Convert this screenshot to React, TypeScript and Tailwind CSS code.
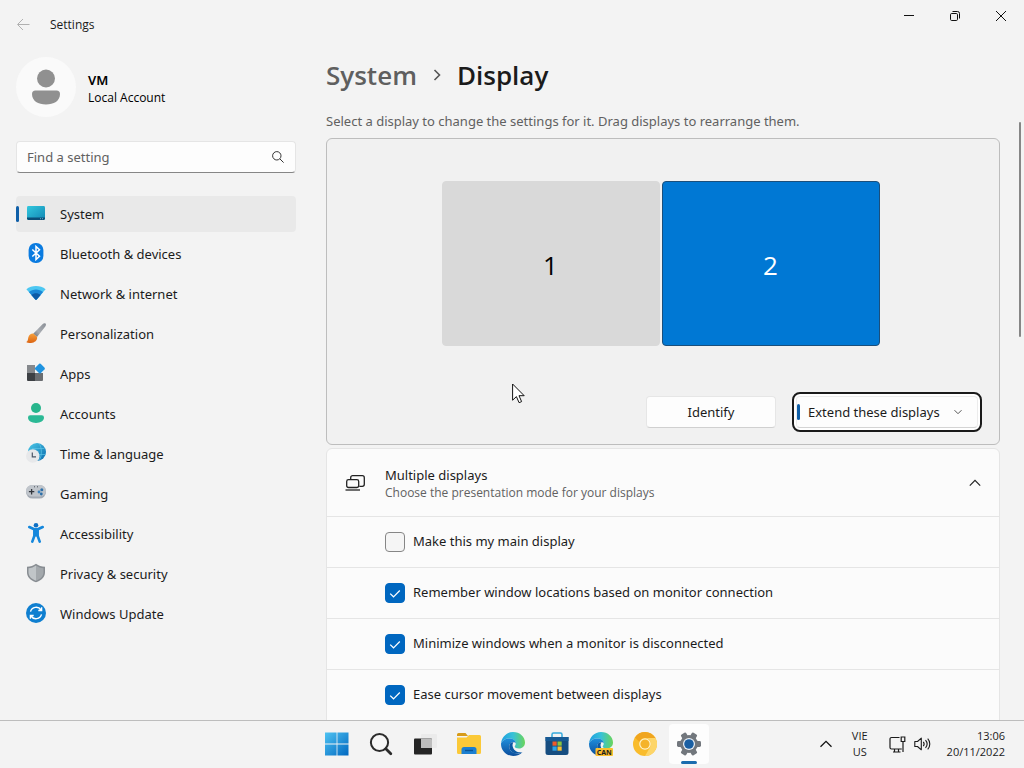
import React, { useState } from "react";

interface NavItem {
  label: string;
  icon: React.ReactNode;
}

interface DisplayOption {
  id: string;
  label: string;
  checked: boolean;
}

const SystemIcon = () => (
  <svg viewBox="0 0 20 20" className="h-5 w-5">
    <defs>
      <linearGradient id="sys" x1="0" y1="0" x2="1" y2="1">
        <stop offset="0" stopColor="#32c8de" />
        <stop offset="1" stopColor="#1287b4" />
      </linearGradient>
    </defs>
    <rect x="1" y="3" width="18" height="14" rx="1.4" fill="url(#sys)" />
    <path d="M1 14.4h18v1.2a1.4 1.4 0 0 1-1.4 1.4H2.4A1.4 1.4 0 0 1 1 15.6z" fill="#0b4f78" />
    <path d="M14 15.7h1M16 15.7h1" stroke="#8fd0e8" strokeWidth=".7" />
  </svg>
);

const BluetoothIcon = () => (
  <svg viewBox="0 0 20 20" className="h-5 w-5">
    <rect x="2.6" y="0" width="14.8" height="20" rx="7" fill="#0a7be0" />
    <path d="M6.3 6.5l7.2 6.7-3.5 3.3V3.5l3.5 3.3-7.2 6.7" fill="none" stroke="#fff" strokeWidth="1.5" />
  </svg>
);

const NetworkIcon = () => (
  <svg viewBox="0 0 20 20" className="h-5 w-5">
    <path d="M.4 6.2C5.5 1.8 14.5 1.8 19.6 6.2L10.7 16.4a1 1 0 0 1-1.4 0z" fill="#4cc7f2" />
    <path d="M2.9 9C6.8 5.6 13.2 5.6 17.1 9l-6.4 7.400a1 1 0 0 1-1.4 0z" fill="#1b87d6" />
    <path d="M5.4 11.9c2.6-2.3 6.6-2.3 9.2 0l-3.900 4.500a1 1 0 0 1-1.4 0z" fill="#0d5aa5" />
  </svg>
);

const BrushIcon = () => (
  <svg viewBox="0 0 20 20" className="h-5 w-5">
    <defs>
      <linearGradient id="handle" x1="1" y1="0" x2="0" y2="1">
        <stop offset="0" stopColor="#8a8f96" />
        <stop offset=".6" stopColor="#a9adb3" />
        <stop offset="1" stopColor="#6d7076" />
      </linearGradient>
      <linearGradient id="bristle" x1="0" y1="0" x2="0" y2="1">
        <stop offset="0" stopColor="#f7a13c" />
        <stop offset="1" stopColor="#dc6412" />
      </linearGradient>
    </defs>
    <path d="M19.5.5c.8.7.5 1.9-.2 2.9L11 14 7.2 10.7 16.5 1.2c1-1 2.2-1.4 3-.7z" fill="url(#handle)" />
    <path d="M7.3 10.6l3.8 3.4c.6 3.2-2.600 6-6.300 5.900-2 0-3.900-.3-4.500-1 1.800-.6 1.500-2.200 2-4.300.6-2.700 2.900-4.200 5-4z" fill="url(#bristle)" />
  </svg>
);

const AppsIcon = () => (
  <svg viewBox="0 0 20 20" className="h-5 w-5">
    <path d="M1 2h8v8H1z" fill="#85888c" />
    <path d="M1 10h8v8H2a1 1 0 0 1-1-1z" fill="#3d4044" />
    <path d="M9 10h8v7a1 1 0 0 1-1 1H9z" fill="#6a6d71" />
    <path d="M13.2.8a1 1 0 0 1 1.4 0l4 4a1 1 0 0 1 0 1.4l-4 4a1 1 0 0 1-1.4 0l-4-4a1 1 0 0 1 0-1.4z" fill="#1f93e0" />
  </svg>
);

const AccountsIcon = () => (
  <svg viewBox="0 0 20 20" className="h-5 w-5">
    <circle cx="10" cy="5" r="5" fill="#27b58c" />
    <path d="M4.3 12.3h11.4A2.3 2.3 0 0 1 18 14.6c0 3.500-3.600 5.400-8 5.400s-8-1.900-8-5.400a2.300 2.300 0 0 1 2.300-2.300z" fill="#2bb995" />
  </svg>
);

const TimeIcon = () => (
  <svg viewBox="0 0 20 20" className="h-5 w-5">
    <defs>
      <linearGradient id="globe" x1="0" y1="0" x2="1" y2="1">
        <stop offset="0" stopColor="#4cc9e8" />
        <stop offset="1" stopColor="#0b6cae" />
      </linearGradient>
    </defs>
    <circle cx="11" cy="9" r="9" fill="url(#globe)" />
    <path d="M6 5.5h12.5M12 11.5h7.5M13.5 1c2.5 5 2.5 11 0 16" fill="none" stroke="#5cc4e6" strokeWidth=".7" />
    <circle cx="6.8" cy="13" r="6.8" fill="#e7e8ea" />
    <path d="M6.3 9.5v4.3H10" fill="none" stroke="#4d5666" strokeWidth="1.2" />
  </svg>
);

const GamingIcon = () => (
  <svg viewBox="0 0 20 20" className="h-5 w-5">
    <rect x="0" y="2" width="20" height="13.6" rx="6.5" fill="#a4abb4" />
    <rect x="0" y="2" width="20" height="11.5" rx="5.75" fill="#c0c5cb" />
    <path d="M5.6 6v5.4M2.9 8.7h5.4" stroke="#33373d" strokeWidth="1.3" />
    <path d="M8 3.8h1M11 3.8h1" stroke="#4b5058" />
    <circle cx="15.8" cy="6.7" r="1.5" fill="#2d6fa8" />
    <circle cx="13" cy="9" r="1.4" fill="#3a83bf" />
    <circle cx="15.3" cy="11" r="1.4" fill="#2d6fa8" />
  </svg>
);

const AccessibilityIcon = () => (
  <svg viewBox="0 0 20 20" className="h-5 w-5">
    <circle cx="10" cy="2.3" r="2.3" fill="#0d6fc4" />
    <path d="M7.2 5h5.6v8.5H7.2z" fill="#1487dc" />
    <path
      d="M3.3 4l4.9 2.3h3.6L16.7 4M8.5 6.5v6L6.3 18.6M11.5 6.5v6l2.2 6.1"
      fill="none"
      stroke="#1487dc"
      strokeWidth="2.6"
      strokeLinecap="round"
      strokeLinejoin="round"
    />
  </svg>
);

const ShieldIcon = () => (
  <svg viewBox="0 0 20 20" className="h-5 w-5">
    <path d="M10 .8c2.6 2 5.6 2.9 9 3v5.400c0 4.600-3.200 7.900-9 10.100-5.800-2.200-9-5.500-9-10.100V3.800c3.400-.1 6.400-1 9-3z" fill="#888d92" />
    <path d="M10 2.5v15.200c-5-2-7.500-4.800-7.500-8.500V5.200c2.800-.2 5.300-1 7.500-2.700z" fill="#c0c5c8" />
    <path d="M10 2.5v15.200c5-2 7.500-4.800 7.500-8.500V5.200c-2.800-.2-5.300-1-7.500-2.700z" fill="#a3a8ac" />
  </svg>
);

const UpdateIcon = () => (
  <svg viewBox="0 0 20 20" className="h-5 w-5">
    <circle cx="10" cy="10" r="10" fill="#0f7fd0" />
    <path
      d="M4.5 8.7A5.8 5.8 0 0 1 15 7M15.6 4.2v3.3h-3.3M15.5 11.3A5.8 5.8 0 0 1 5 13M4.4 15.8v-3.3h3.3"
      fill="none"
      stroke="#fff"
      strokeWidth="1.4"
    />
  </svg>
);

const navItems: NavItem[] = [
  { label: "System", icon: <SystemIcon /> },
  { label: "Bluetooth & devices", icon: <BluetoothIcon /> },
  { label: "Network & internet", icon: <NetworkIcon /> },
  { label: "Personalization", icon: <BrushIcon /> },
  { label: "Apps", icon: <AppsIcon /> },
  { label: "Accounts", icon: <AccountsIcon /> },
  { label: "Time & language", icon: <TimeIcon /> },
  { label: "Gaming", icon: <GamingIcon /> },
  { label: "Accessibility", icon: <AccessibilityIcon /> },
  { label: "Privacy & security", icon: <ShieldIcon /> },
  { label: "Windows Update", icon: <UpdateIcon /> },
];

const initialOptions: DisplayOption[] = [
  { id: "main", label: "Make this my main display", checked: false },
  { id: "remember", label: "Remember window locations based on monitor connection", checked: true },
  { id: "minimize", label: "Minimize windows when a monitor is disconnected", checked: true },
  { id: "ease", label: "Ease cursor movement between displays", checked: true },
];

const TitleBar = () => (
  <header className="flex h-[49px] shrink-0 items-start justify-between">
    <div className="flex h-[49px] items-center gap-5 pl-4">
      <button type="button" aria-label="Back" disabled>
        <svg viewBox="0 0 14 14" className="h-3.5 w-3.5" fill="none" stroke="#b0b0b0">
          <path d="M13.5 6.5H2M7 1L1.5 6.5 7 12" />
        </svg>
      </button>
      <span className="font-['Open_Sans',sans-serif] text-xs text-[#1b1b1b]">Settings</span>
    </div>
    <div className="flex">
      <button type="button" aria-label="Minimize" className="flex h-8 w-[46px] items-center justify-center">
        <svg viewBox="0 0 12 12" className="h-3 w-3" stroke="#111">
          <path d="M1 5.5h10" />
        </svg>
      </button>
      <button type="button" aria-label="Restore" className="flex h-8 w-[46px] items-center justify-center">
        <svg viewBox="0 0 12 12" className="h-3 w-3" fill="none" stroke="#111">
          <rect x="1.5" y="3.5" width="7" height="7" rx="1.2" />
          <path d="M3.5 1.5H8.5a2 2 0 0 1 2 2v5" />
        </svg>
      </button>
      <button type="button" aria-label="Close" className="flex h-8 w-[46px] items-center justify-center">
        <svg viewBox="0 0 12 12" className="h-3 w-3" stroke="#111">
          <path d="M1 1l10 10M11 1L1 11" />
        </svg>
      </button>
    </div>
  </header>
);

const Sidebar = () => (
  <aside className="w-[280px] shrink-0 pt-2">
    <div className="flex items-center gap-3">
      <div className="flex h-[60px] w-[60px] items-center justify-center rounded-full bg-[#fafafa]">
        <svg viewBox="0 0 28 36" className="h-9 w-7" fill="#909090">
          <circle cx="14" cy="9.5" r="9" />
          <path d="M3.5 21.5h21A3.5 3.5 0 0 1 28 25c0 7-6.3 10.5-14 10.5S0 32 0 25a3.500 3.500 0 0 1 3.500-3.500z" />
        </svg>
      </div>
      <div className="pt-0.5 text-black">
        <p className="text-[13px] leading-5 font-semibold">VM</p>
        <p className="font-['Open_Sans',sans-serif] text-xs leading-4">Local Account</p>
      </div>
    </div>

    <div className="relative mt-6">
      <input
        type="text"
        placeholder="Find a setting"
        aria-label="Find a setting"
        className="block h-8 w-full rounded border border-[#e5e5e5] border-b-[#868686] bg-[#fdfdfd] pr-9 pl-2.5 text-[13px] placeholder:text-[#616161]"
      />
      <svg viewBox="0 0 12 12" className="absolute top-2.5 right-3 h-3 w-3" fill="none" stroke="#333">
        <circle cx="4.8" cy="4.8" r="4.2" />
        <path d="M7.9 7.9l3.7 3.7" />
      </svg>
    </div>

    <nav className="mt-[23px] flex flex-col gap-1">
      {navItems.map((item, index) => (
        <a
          key={item.label}
          href="#"
          className={
            index === 0
              ? "flex h-9 items-center rounded bg-[#e9e9e9] text-[13px] text-[#1b1b1b]"
              : "flex h-9 items-center rounded text-[13px] text-[#1b1b1b]"
          }
        >
          <span className={index === 0 ? "h-4 w-[3px] rounded-full bg-[#0f5fa8]" : "h-4 w-[3px]"} />
          <span className="ml-[7px] pb-0.5">{item.icon}</span>
          <span className="ml-3.5 pt-0.5">{item.label}</span>
        </a>
      ))}
    </nav>
  </aside>
);

const ArrangePanel = () => {
  const [selected, setSelected] = useState<number>(2);
  const [mode, setMode] = useState<string>("extend");

  return (
    <div className="relative rounded-md border border-[#bdbdbd] bg-[#f1f1f1] pt-[42px] pr-[17px] pb-3">
      <div className="flex justify-center gap-0.5 pl-3 font-['Open_Sans',sans-serif] text-[26px]">
        {[1, 2].map((n) => (
          <button
            key={n}
            type="button"
            onClick={() => setSelected(n)}
            className={
              n === selected
                ? "h-[165px] w-[218px] rounded border border-[#1a4f7c] bg-[#0078d4] pt-1 text-white"
                : "h-[165px] w-[218px] rounded border border-[#d9d9d9] bg-[#d9d9d9] pt-1 text-black"
            }
          >
            {n}
          </button>
        ))}
      </div>
      <div className="mt-[46px] flex items-center justify-end gap-4">
        <button
          type="button"
          className="h-8 w-[130px] rounded border border-[#e6e6e6] border-b-[#d0d0d0] bg-[#fdfdfd] pt-0.5 text-[13px] text-[#1b1b1b]"
        >
          Identify
        </button>
        <div className="relative h-10 w-[190px] rounded-lg border-2 border-[#1a1a1a] bg-white p-0.5">
          <select
            aria-label="Presentation mode"
            value={mode}
            onChange={(e) => setMode(e.target.value)}
            className="h-8 w-full appearance-none rounded border border-[#ececec] border-b-[#d4d4d4] bg-[#fdfdfd] pt-0.5 pl-[11px] text-[13px] text-[#1b1b1b]"
          >
            <option value="duplicate">Duplicate these displays</option>
            <option value="extend">Extend these displays</option>
            <option value="only1">Show only on 1</option>
            <option value="only2">Show only on 2</option>
          </select>
          <span className="absolute top-2.5 left-[3px] h-4 w-[3px] rounded-full bg-[#0f5fa8]" />
          <svg
            viewBox="0 0 8 8"
            className="pointer-events-none absolute top-3.5 right-[18px] h-2 w-2"
            fill="none"
            stroke="#555"
          >
            <path d="M.5 2.2L4 5.7l3.5-3.5" />
          </svg>
        </div>
      </div>
      <svg viewBox="0 0 13 21" className="absolute top-[244px] left-[185px] h-[21px] w-[13px]">
        <path
          d="M.6 1v16.2l3.8-3.6 2.7 6.1 2.5-1.1-2.6-5.9h5.2z"
          fill="#fff"
          stroke="#111"
          strokeLinejoin="round"
        />
      </svg>
    </div>
  );
};

const MultipleDisplays = () => {
  const [options, setOptions] = useState<DisplayOption[]>(initialOptions);

  const toggle = (id: string): void => {
    setOptions((prev) => prev.map((o) => (o.id === id ? { ...o, checked: !o.checked } : o)));
  };

  return (
    <section className="mt-[3px] rounded-t-md border border-[#e5e5e5] bg-[#fbfbfb]">
      <button type="button" className="flex h-[67px] w-full items-center pr-[18px] pl-[18px] text-left">
        <svg viewBox="0 0 20 16" className="h-4 w-5" fill="none" stroke="#222" strokeWidth="1.3">
          <path d="M5.7 4.5V2.7a2 2 0 0 1 2-2h9.6a2 2 0 0 1 2 2v6.6a2 2 0 0 1-2 2h-3" />
          <rect x="1.7" y="4.7" width="12" height="7.8" rx="1.8" />
          <path d="M.5 15h14.5" />
        </svg>
        <span className="ml-5 flex-1 pt-0.5">
          <span className="block text-[13px] leading-[18px] text-[#1b1b1b]">Multiple displays</span>
          <span className="block font-['Open_Sans',sans-serif] text-xs leading-[18px] text-[#616161]">
            Choose the presentation mode for your displays
          </span>
        </span>
        <svg viewBox="0 0 12 12" className="h-3 w-3" fill="none" stroke="#222" strokeWidth="1.2">
          <path d="M.8 8.6L6 3.4l5.2 5.2" />
        </svg>
      </button>
      {options.map((o) => (
        <label key={o.id} className="flex h-[51px] items-center gap-2 border-t border-[#e5e5e5] pl-[58px]">
          <span className="relative h-5 w-5">
            <input
              type="checkbox"
              checked={o.checked}
              onChange={() => toggle(o.id)}
              className="block h-5 w-5 appearance-none rounded border border-[#868686] bg-[#f5f5f5] checked:border-[#0067c0] checked:bg-[#0067c0]"
            />
            {o.checked && (
              <svg
                viewBox="0 0 20 20"
                className="pointer-events-none absolute inset-0 h-5 w-5"
                fill="none"
                stroke="#fff"
                strokeWidth="1.2"
              >
                <path d="M5.2 10.6l3.3 3.2 6.3-6.3" />
              </svg>
            )}
          </span>
          <span className="text-[13px] text-[#1b1b1b]">{o.label}</span>
        </label>
      ))}
    </section>
  );
};

const StartLogo = () => (
  <svg viewBox="0 0 24 24" className="h-6 w-6">
    <defs>
      <linearGradient id="win" x1="0" y1="0" x2="1" y2="1">
        <stop offset="0" stopColor="#4fc3f2" />
        <stop offset="1" stopColor="#0067c0" />
      </linearGradient>
    </defs>
    <path d="M0 .5h11.6v11.1H0zM12.400.5H23.500v11.100H12.400zM0 12.400h11.600v11.100H0zM12.400 12.400h11.100v11.100H12.400z" fill="url(#win)" />
  </svg>
);

const SearchLogo = () => (
  <svg viewBox="0 0 24 24" className="h-6 w-6" fill="none" stroke="#2b2b2b">
    <circle cx="10.5" cy="10.5" r="8.6" strokeWidth="2" fill="#f7f7f7" />
    <path d="M16.8 16.8l5 5" strokeWidth="2.8" strokeLinecap="round" />
  </svg>
);

const TaskViewLogo = () => (
  <svg viewBox="0 0 24 24" className="h-6 w-6">
    <rect x="8" y="2" width="16" height="14" rx="1" fill="#ebebeb" />
    <rect x="1" y="6.5" width="18" height="16" rx="1" fill="#252525" />
    <path d="M8 6.5h10a1 1 0 0 1 1 1V16H8z" fill="#bdbdbd" />
  </svg>
);

const ExplorerLogo = () => (
  <svg viewBox="0 0 24 24" className="h-6 w-6">
    <path d="M0 2.5A1.5 1.5 0 0 1 1.500 1h7l2.500 3h-11z" fill="#d79b1a" />
    <path d="M0 5.5h9.5L12 3h10.500A1.500 1.500 0 0 1 24 4.500V20.500A1.500 1.500 0 0 1 22.500 22h-21A1.500 1.500 0 0 1 0 20.500z" fill="#fbc938" />
    <path d="M4.5 22v-4.500A2.500 2.500 0 0 1 7 15h10a2.500 2.500 0 0 1 2.500 2.500V22z" fill="#1b7fd1" />
    <path d="M8 18.5h8" stroke="#0a5395" strokeWidth="1.4" />
  </svg>
);

const EdgeShape = ({ id }: { id: string }) => (
  <>
    <defs>
      <linearGradient id={`${id}-top`} x1="0" y1="0" x2="1" y2="0">
        <stop offset="0" stopColor="#1f9fe0" />
        <stop offset=".5" stopColor="#37c1d8" />
        <stop offset="1" stopColor="#6ad55a" />
      </linearGradient>
      <linearGradient id={`${id}-low`} x1="0" y1="0" x2="0" y2="1">
        <stop offset="0" stopColor="#1f8fdc" />
        <stop offset="1" stopColor="#0b4d9c" />
      </linearGradient>
    </defs>
    <path d="M0 11.5C.6 5 5.6 0 12 0c7 0 12 5 12 10.500 0 3.600-2.600 6-6 6-2.600 0-4.300-.9-4.300-2 0-.7 1-1.200 1-2.800C14.700 8.500 12 6.500 8.500 6.500 4.300 6.500 1.200 8.600 0 11.500z" fill={`url(#${id}-top)`} />
    <path d="M0 11.5C1.2 8.600 4.300 6.500 8.500 6.500c3.500 0 6.200 2 6.200 4.800-1-1-2-1.300-3-1.200-2 .2-3.500 2-3.500 4.400 0 4 3.600 7 8 7 1.800 0 3.600-.4 5.300-1.500C19.500 22.600 16 24 12.200 24 5.400 24 0 18.600 0 12z" fill={`url(#${id}-low)`} />
    <path d="M8.2 14.5c0 4.500 4 7.300 8.300 7 2-.1 3.600-.7 5-1.500-4.300 1-8.800-1-9.800-5.500-.4-1.800 0-3.300 1-4.200-2.700-.8-4.500 1.400-4.500 4.200z" fill="#0c59a4" />
  </>
);

const EdgeLogo = () => (
  <svg viewBox="0 0 24 24" className="h-6 w-6">
    <EdgeShape id="edge" />
  </svg>
);

const EdgeCanaryLogo = () => (
  <svg viewBox="0 0 24 24" className="h-6 w-6">
    <EdgeShape id="canary" />
    <rect x="6.5" y="16" width="17.5" height="8" rx="1" fill="#fbc02d" />
    <text x="15.2" y="22.7" textAnchor="middle" fontSize="7" fontWeight="700" fill="#1c1c1c">
      CAN
    </text>
  </svg>
);

const StoreLogo = () => (
  <svg viewBox="0 0 24 24" className="h-6 w-6">
    <path d="M7 7V2.5A1.5 1.5 0 0 1 8.5 1h7A1.5 1.5 0 0 1 17 2.5V7" fill="none" stroke="#35a9dc" strokeWidth="1.5" />
    <path d="M.5 5h23v15.500A2.500 2.500 0 0 1 21 23H3A2.500 2.500 0 0 1 .5 20.500z" fill="#164d80" />
    <path d="M.5 5h23v4H.5z" fill="#175a94" />
    <path d="M7.5 9.5h4.2v4.2H7.5z" fill="#f05a28" />
    <path d="M12.5 9.5h4.2v4.2h-4.2z" fill="#8bc53f" />
    <path d="M7.5 14.5h4.2v4.2H7.5z" fill="#2ea3e6" />
    <path d="M12.5 14.5h4.2v4.2h-4.2z" fill="#fdc030" />
  </svg>
);

const ChromeCanaryLogo = () => (
  <svg viewBox="0 0 24 24" className="h-6 w-6">
    <circle cx="12" cy="12" r="12" fill="#f9bc2c" />
    <path d="M12 0a12 12 0 0 1 10.4 6H12a6 6 0 0 0-5.6 4L2 5.4A12 12 0 0 1 12 0z" fill="#f0a51e" />
    <path d="M22.4 6A12 12 0 0 1 12 24l5.2-9A6 6 0 0 0 12 6z" fill="#fdd568" />
    <circle cx="12" cy="12" r="5.8" fill="#fff3cc" />
    <circle cx="12" cy="12" r="4.6" fill="#f5b32a" />
  </svg>
);

const GearLogo = () => (
  <svg viewBox="0 0 24 24" className="h-6 w-6">
    <g fill="#72777d">
      <circle cx="12" cy="12" r="9" />
      {[30, 90, 150].map((angle) => (
        <rect key={angle} x="9" y="0" width="6" height="24" rx="1.4" transform={`rotate(${angle} 12 12)`} />
      ))}
    </g>
    <circle cx="12" cy="12" r="6" fill="#eef3f8" />
    <circle cx="12" cy="12" r="4.8" fill="#1a5fa3" />
  </svg>
);

const taskbarApps: NavItem[] = [
  { label: "Start", icon: <StartLogo /> },
  { label: "Search", icon: <SearchLogo /> },
  { label: "Task View", icon: <TaskViewLogo /> },
  { label: "File Explorer", icon: <ExplorerLogo /> },
  { label: "Microsoft Edge", icon: <EdgeLogo /> },
  { label: "Microsoft Store", icon: <StoreLogo /> },
  { label: "Microsoft Edge Canary", icon: <EdgeCanaryLogo /> },
  { label: "Chrome Canary", icon: <ChromeCanaryLogo /> },
  { label: "Settings", icon: <GearLogo /> },
];

const Taskbar = () => (
  <footer className="grid h-12 shrink-0 grid-cols-[1fr_auto_1fr] items-center border-t border-[#bdbdbd] bg-[#f3f3f3] pb-px pl-0.5 text-[#1b1b1b]">
    <div />
    <div className="flex gap-1">
      {taskbarApps.map((app) => {
        const active = app.label === "Settings";
        return (
          <button
            key={app.label}
            type="button"
            aria-label={app.label}
            className={
              active
                ? "relative flex h-10 w-10 items-center justify-center rounded bg-[#fdfdfd]"
                : "relative flex h-10 w-10 items-center justify-center rounded"
            }
          >
            {app.icon}
            {active && <span className="absolute bottom-0 left-3 h-[3px] w-4 rounded-full bg-[#1a6cae]" />}
          </button>
        );
      })}
    </div>
    <div className="flex items-center justify-end pr-[19px] font-['Open_Sans',sans-serif] text-[11px] leading-4">
      <button type="button" aria-label="Show hidden icons">
        <svg viewBox="0 0 12 12" className="h-3 w-3" fill="none" stroke="#111" strokeWidth="1.3">
          <path d="M.5 8.8L6 3.3l5.5 5.5" />
        </svg>
      </button>
      <button type="button" className="ml-5 text-center leading-4">
        VIE
        <br />
        US
      </button>
      <button type="button" aria-label="Network and volume" className="ml-[21px] flex items-center gap-2">
        <svg viewBox="0 0 17 17" className="h-[17px] w-[17px]" fill="none" stroke="#1b1b1b" strokeWidth="1.2">
          <path d="M10.5 1.5h-8a1.5 1.5 0 0 0-1.5 1.500v8.500A1.500 1.500 0 0 0 2.500 13h10.300M5.500 13v3M9.500 13v3M4 16h7.500" />
          <path d="M12.2 1h3.600v4.500h-3.600zM14 5.500V16" />
        </svg>
        <svg viewBox="0 0 17 16" className="h-4 w-[17px]" fill="none" stroke="#1b1b1b" strokeWidth="1.1">
          <path d="M.8 5.5h2.700L7.300 2.200v11.600L3.500 10.500H.8z" strokeLinejoin="round" />
          <path d="M9.3 5.8c1 1.300 1 3.100 0 4.400M11.500 4.200c1.900 2.200 1.900 5.400 0 7.600M13.700 2.700c2.800 3 2.800 7.600 0 10.600" />
        </svg>
      </button>
      <button type="button" className="ml-4 text-right leading-4">
        13:06
        <br />
        20/11/2022
      </button>
    </div>
  </footer>
);

const App: React.FC = () => (
  <div className="flex h-screen flex-col overflow-hidden bg-[#f3f3f3] font-['Noto_Sans','Open_Sans',sans-serif]">
    <TitleBar />
    <div className="flex min-h-0 flex-1 gap-[30px] overflow-hidden pl-4">
      <Sidebar />
      <main className="flex min-w-0 flex-1 flex-col">
        <h1 className="flex items-center gap-3.5 pt-1.5 font-['Open_Sans',sans-serif] text-[26px] leading-10 font-semibold">
          <a href="#" className="text-[#5f5f5f]">
            System
          </a>
          <svg viewBox="0 0 12 12" className="h-3 w-3" fill="none" stroke="#555" strokeWidth="1.6">
            <path d="M3.5 1L8.5 6l-5 5" />
          </svg>
          <span className="text-[#1b1b1b]">Display</span>
        </h1>
        <div className="flex min-h-0 flex-1">
          <div className="min-w-0 flex-1 pt-4">
            <p className="mb-[7px] text-[13px] leading-5 text-[#616161]">
              Select a display to change the settings for it. Drag displays to rearrange them.
            </p>
            <ArrangePanel />
            <MultipleDisplays />
          </div>
          <div className="flex w-6 justify-end pt-[27px] pr-[3px]">
            <div className="h-[215px] w-0.5 rounded-full bg-[#868686]" />
          </div>
        </div>
      </main>
    </div>
    <Taskbar />
  </div>
);

export default App;
